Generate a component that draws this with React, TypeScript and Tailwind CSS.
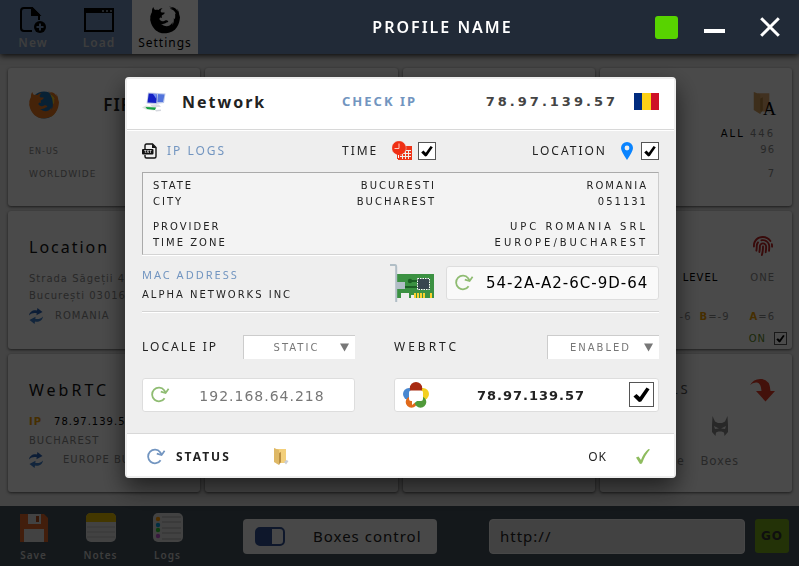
import React from "react";
import { ImFirefox } from "react-icons/im";
import { FaFingerprint } from "react-icons/fa";

const sans = "font-['Noto_Sans','Open_Sans',sans-serif]";
const wide = "font-['DejaVu_Sans',Verdana,sans-serif]";

function Check({ label, size }: { label: string; size: "sm" | "md" | "lg" }) {
  const box = size === "sm" ? "size-[13px]" : size === "md" ? "size-[18px]" : "size-[25px]";
  return (
    <span className={`relative inline-block shrink-0 ${box}`}>
      <input
        type="checkbox"
        defaultChecked
        aria-label={label}
        className="peer block size-full appearance-none border border-[#555] bg-white"
      />
      <svg viewBox="0 0 18 18" className="pointer-events-none absolute inset-0 hidden size-full peer-checked:block" aria-hidden="true">
        <path d="M3.2 10.4 5.4 8.6 7.8 10.8 12.600 4 14.800 5.200 8.800 14 7.200 14.400Z" fill="#000" />
      </svg>
    </span>
  );
}

function Refresh({ className }: { className: string }) {
  return (
    <svg viewBox="0 0 19 17" className={`h-[17px] w-[19px] shrink-0 ${className}`} fill="none" stroke="currentColor" aria-hidden="true">
      <path d="M13.600 12.200A6.800 6.800 0 1 1 13.200 4.200L14.500 6.500" strokeWidth="1.800" />
      <path d="M9.800 5.600 14.600 7 17.600 2.800" strokeWidth="1.700" />
    </svg>
  );
}

function Sync() {
  return (
    <svg viewBox="0 0 14 16" className="h-4 w-3.5 shrink-0" fill="#2a62b5" aria-hidden="true">
      <path d="M0 7.500C.6 3.600 4 1.600 8 2.400L8.400 0 13.500 4 7.400 7.200 7.800 5.200C5 4.600 2.400 5 0 7.500Z" />
      <path d="M14 8.500C13.400 12.400 10 14.400 6 13.600L5.600 16 .5 12 6.600 8.800 6.200 10.800C9 11.400 11.600 11 14 8.500Z" fill="#3c7cc8" />
    </svg>
  );
}

function Firefox() {
  return (
    <span className="relative block size-[30px]">
      <svg viewBox="0 0 30 30" className="absolute inset-0" aria-hidden="true">
        <circle cx="15" cy="15" r="13.500" fill="#1d6fb0" />
        <path d="M21 3.500A14 14 0 0 1 22 27Q27 14 21 3.500Z" fill="#f3c524" />
      </svg>
      <ImFirefox className="absolute inset-0 size-[30px] text-[#e8771f]" />
    </span>
  );
}

function Computers() {
  return (
    <svg viewBox="0 0 24 20" className="h-5 w-6" aria-hidden="true">
      <path d="M13 1 23.500 1.500 22 11 12 12Z" fill="#b9c6ea" />
      <path d="M14 2 22.500 2.500 21 10 13 10Z" fill="#5274dc" />
      <path d="M6 .5 16 1 15.200 12.500 4.500 11.500Z" fill="#c4cde6" />
      <path d="M6.700 1.500 15 2 14.300 11 5.500 10.500Z" fill="#1420c4" />
      <path d="M11 2 15 2 14.400 7Z" fill="#6f8cf0" />
      <path d="M8 12.500 17 12.500 19 15 10 15Z" fill="#d8dbe2" />
      <path d="M0 15.500 4 13.500 15 15.500 12 18.500 4 17.500Z" fill="#dfe4df" />
      <path d="M3.500 15 14 15.500 13 18 5 17Z" fill="#15a042" />
      <path d="M13 18 19 17.500 19 19 14 19.500Z" fill="#d5d8de" />
    </svg>
  );
}

function TxtFile() {
  return (
    <svg viewBox="0 0 15 16" className="h-4 w-[15px] overflow-visible" aria-hidden="true">
      <path d="M3 6V2.500Q3 1 4.500 1H10.500L14 4.500V13.500Q14 15 12.500 15H4.500Q3 15 3 13.500V12" fill="none" stroke="#111" strokeWidth="1.400" />
      <path d="M10 1V5H14Z" fill="#111" />
      <rect x="0" y="6" width="11.500" height="5.600" rx="1" fill="#111" />
      <text x="5.800" y="10.300" textAnchor="middle" fontSize="4" fontWeight="700" fill="#eee" fontFamily="Liberation Sans" letterSpacing="0">TXT</text>
    </svg>
  );
}

function TimeIcon() {
  return (
    <svg viewBox="0 0 20 20" className="size-5" aria-hidden="true">
      <rect x="6" y="5" width="14" height="14" fill="#ef3418" />
      <path d="M10 9.500H19M8 12.500H19M8 15.500H19M10.500 9V18M13.500 9V18M16.500 9V18" stroke="#eee" strokeWidth="1" />
      <circle cx="7" cy="7" r="7.200" fill="#ef2f14" stroke="#eee" strokeWidth=".4" />
      <path d="M7 2.500V7.500H2.500" fill="none" stroke="#ffc9bf" strokeWidth="1" />
      <path d="M5 13H8V18H5Z" fill="#ef3418" />
      <path d="M6.500 14V17" stroke="#fff" />
    </svg>
  );
}

function NetworkCard() {
  return (
    <svg viewBox="0 0 44 38" className="h-[38px] w-11" aria-hidden="true">
      <path d="M7 10H44V34H24V31H21V34H19V29H11V34H7Z" fill="#3b9142" />
      <path d="M0 1H5Q6.200 1 6.200 3V38" fill="none" stroke="#b1bec6" strokeWidth="2" />
      <rect x="7" y="18" width="8" height="7" fill="#b1bec6" />
      <path d="M15 23H27M20 17H27" stroke="#1c5e24" strokeWidth="2" />
      <circle cx="20" cy="17" r="2.200" fill="#1c5e24" />
      <rect x="27.500" y="14.500" width="12" height="11" fill="#37474f" stroke="#fff" strokeDasharray="1.500 1" />
      <path d="M25 29V34M28 29V34M31 29V34M34 29V34M41 29V34" stroke="#fbd130" strokeWidth="2" />
    </svg>
  );
}

function WebRtcLogo() {
  return (
    <svg viewBox="0 0 26 26" className="size-[26px]" aria-hidden="true">
      <circle cx="6" cy="12" r="6" fill="#4787d0" />
      <circle cx="20" cy="12" r="6" fill="#f3d021" />
      <circle cx="8.500" cy="20" r="5.800" fill="#e06a1b" />
      <circle cx="17.500" cy="20" r="5.800" fill="#509a3a" />
      <circle cx="13" cy="6.200" r="6.200" fill="#a82a10" />
      <path d="M8 8.500H18Q20 8.500 20 10.500V17Q20 19 18 19H14L9 23V19H8Q6 19 6 17V10.500Q6 8.500 8 8.500Z" fill="#fff" />
    </svg>
  );
}

function Folder({ className, tone }: { className: string; tone: string }) {
  return (
    <svg viewBox="0 0 15 17" className={className} aria-hidden="true">
      <path d="M3 1H12V15H3Z" fill={tone} />
      <path d="M0 0 5 2V17L0 14Z" fill={tone} />
      <path d="M0 0 5 2V17L0 14Z" fill="#a0722a" fillOpacity=".25" />
      <path d="M5 5 7 4V14L5 17Z" fill="#a0722a" fillOpacity=".7" />
      <path d="M10 14 12.500 12 14.500 13 12 16.500Z" fill="#c9cdd4" />
    </svg>
  );
}

function Tool({ label, active, children }: { label: string; active?: boolean; children: React.ReactNode }) {
  return (
    <button
      type="button"
      className={`flex w-[66px] flex-col items-center pt-[5px] text-xs leading-4 tracking-[1px] ${active ? "bg-white text-black" : "font-semibold text-[#ccc]"}`}
    >
      <span className="flex h-[30px] items-center">{children}</span>
      {label}
    </button>
  );
}

function DockItem({ label, children }: { label: string; children: React.ReactNode }) {
  return (
    <button type="button" className="flex w-[67px] flex-col items-center gap-1 text-[10px] font-semibold leading-4 tracking-[1px] text-[#ccc]">
      <span className="block size-[30px]">{children}</span>
      {label}
    </button>
  );
}

function Card({ children }: { children?: React.ReactNode }) {
  return <section className="overflow-hidden rounded-[3px] bg-[#f7f7f7] px-[21px] text-[#888] shadow-[0_1px_3px_rgba(0,0,0,0.6)]">{children}</section>;
}

function Cards() {
  return (
    <main className={`grid flex-1 grid-cols-4 grid-rows-3 gap-[5px] py-3.5 pl-2 pr-[7px] text-[10px] tracking-[1px] ${wide}`}>
      <Card>
        <div className="flex items-center justify-between pt-[22px]">
          <Firefox />
          <h2 className={`text-[17px] font-semibold leading-6 text-[#222] ${sans}`}>FIREFOX</h2>
        </div>
        <p className="mt-6 text-[8px] leading-4">EN-US</p>
        <p className="mt-1.5 text-[9px] leading-4">WORLDWIDE</p>
      </Card>
      <Card />
      <Card />
      <Card>
        <div className="-mr-1 flex flex-col items-end pt-6">
          <div className="relative h-6 w-[22px]">
            <Folder className="h-[22px] w-[21px]" tone="#dba66c" />
            <span className="absolute -bottom-px -right-px font-['Liberation_Serif',serif] text-lg leading-4 tracking-normal text-black">A</span>
          </div>
          <p className="mt-2.5 leading-4 tracking-[2px]"><span className="text-black">ALL</span> 446</p>
          <p className="leading-4">96</p>
          <p className="mt-2 leading-4">7</p>
        </div>
      </Card>
      <Card>
        <h2 className={`pt-6 text-base leading-6 tracking-[2px] text-[#111] ${sans}`}>Location</h2>
        <p className="mt-3 whitespace-nowrap leading-4">Strada Săgeții 4</p>
        <p className="whitespace-nowrap leading-[18px]">București 030167</p>
        <p className="flex items-center gap-3 leading-[22px]"><Sync /> ROMANIA</p>
      </Card>
      <Card />
      <Card />
      <Card>
        <div className="-mr-0.5 flex justify-end pt-[23px]"><FaFingerprint className="h-6 w-5 text-[#b22]" /></div>
        <p className="-mr-1 mt-3 flex justify-end gap-8 leading-4"><span className="text-black">LEVEL</span><span>ONE</span></p>
        <p className="-mr-1 mt-[23px] flex justify-end whitespace-nowrap leading-4">
          <span>-6</span><span className="ml-2"><b className="text-[#e99a00]">B</b>=-9</span><span className="ml-5"><b className="text-[#e99a00]">A</b>=6</span>
        </p>
        <div className="-mr-4 mt-1.5 flex items-center justify-end gap-2 text-[#5c8a1e]">ON <Check label="Protection on" size="sm" /></div>
      </Card>
      <Card>
        <h2 className={`pt-6 text-base leading-6 tracking-[3px] text-[#111] ${sans}`}>WebRTC</h2>
        <p className="mt-3 flex gap-3 leading-4"><b className="text-[#e99a00]">IP</b><span className="text-black">78.97.139.57</span></p>
        <p className="leading-[22px]">BUCHAREST</p>
        <p className="flex items-center gap-5 whitespace-nowrap leading-4"><Sync /> EUROPE BUCHAREST</p>
      </Card>
      <Card />
      <Card />
      <Card>
        <div className={`-mr-1 flex items-center justify-between pt-6 text-[13px] tracking-[3px] text-[#555] ${sans}`}>
          <span className="w-[70px] text-right">TOOLS</span>
          <svg viewBox="0 0 25 24" className="h-6 w-[25px]" aria-hidden="true">
            <path d="M0 7Q4 0 12 1Q20 2 20.500 13H25L15.500 23.500 6 13H11.500Q11 5 7 4.500Q3 4 0 7Z" fill="#df3a26" />
          </svg>
        </div>
        <div className={`-mr-1 flex justify-between pr-9 pt-3.5 text-xs leading-4 tracking-[1px] ${sans}`}>
          <span className="w-16 self-end text-right">Cache</span>
          <span className="flex flex-col items-center gap-4">
            <svg viewBox="0 0 16 21" className="h-[21px] w-4" aria-hidden="true">
              <path d="M.5 0 3 5.500 6 7H10L13 5.500 15.500 0 16 9V16L12.500 20 12 16.500 9.500 15.500H6.500L4 16.500 3.500 20 0 16V9Z" fill="#888" />
              <path d="M2 10 7 12.500 3 13ZM14 10 9 12.500 13 13Z" fill="#eee" />
            </svg>
            Boxes
          </span>
        </div>
      </Card>
    </main>
  );
}

function ModeSelect({ id, options }: { id: string; options: string[] }) {
  return (
    <span className="relative block">
      <select id={id} className={`h-6 w-[112px] appearance-none border-l border-t border-[#ccc] bg-white pr-1.5 pt-0.5 text-[10px] tracking-[2px] text-[#777] [text-align-last:center] ${wide}`}>
        {options.map((option) => <option key={option}>{option}</option>)}
      </select>
      <svg viewBox="0 0 10 9" className="pointer-events-none absolute right-1.5 top-2 h-[9px] w-[9px]" aria-hidden="true"><path d="M0 0H10L5 9Z" fill="#777" /></svg>
    </span>
  );
}

function NetworkDialog() {
  return (
    <div className="fixed inset-0 z-10 flex items-center justify-center bg-black/70 pb-3 pl-0.5">
      <div role="dialog" aria-labelledby="network-title" className="w-[551px] max-w-full rounded-[4px] border-2 border-[#eee] bg-[#eee] text-[#222] shadow-[0_10px_25px_rgba(0,0,0,0.6)]">
        <header className="flex h-[51px] items-center border-b border-[#d8d8d8] bg-white px-[15px] pb-1">
          <div className="flex w-[200px] items-center gap-4">
            <Computers />
            <h1 id="network-title" className="text-base font-bold leading-6 tracking-[2px]">Network</h1>
          </div>
          <a href="#check" className="text-[13px] font-bold tracking-[2px] text-[#7295c0]">CHECK IP</a>
          <strong className={`ml-auto text-[13px] tracking-[3px] text-[#444] ${wide}`}>78.97.139.57</strong>
          <svg viewBox="0 0 25 17" className="ml-4 h-[17px] w-[25px]" role="img" aria-label="Romania">
            <path d="M0 0H8V17H0Z" fill="#002b7f" /><path d="M8 0H17V17H8Z" fill="#fcd116" /><path d="M17 0H25V17H17Z" fill="#ce1126" />
          </svg>
        </header>
        <div className="border-t border-white px-[15px]">
          <div className="flex h-[41px] items-center text-xs leading-5 tracking-[2px]">
            <div className="flex w-[200px] items-center gap-2.5">
              <TxtFile />
              <a href="#logs" className="text-[#7295c0]">IP LOGS</a>
            </div>
            <span className="mr-3.5">TIME</span>
            <TimeIcon />
            <span className="ml-1.5 flex"><Check label="Time" size="md" /></span>
            <span className="ml-auto mr-3.5">LOCATION</span>
            <svg viewBox="0 0 12 18" className="mr-2 h-[18px] w-3" aria-hidden="true">
              <path fillRule="evenodd" d="M6 0A6 6 0 0 1 12 6Q12 9 6 18Q0 9 0 6A6 6 0 0 1 6 0ZM6 3.600A2.400 2.400 0 1 0 6 8.400A2.400 2.400 0 1 0 6 3.600Z" fill="#0a84ff" />
            </svg>
            <Check label="Location" size="md" />
          </div>
          <div className="h-[83px] border border-b-[#d4d4d4] border-l-[#aaa] border-r-[#ccc] border-t-[#aaa] bg-[#f3f3f3] px-2.5 py-[5px] shadow-[0_1px_0_#fff]">
            <table className={`w-full text-[10px] leading-4 tracking-[2px] ${wide}`}>
              <tbody>
                <tr><th className="text-left font-normal">STATE</th><td className="text-right">BUCURESTI</td><td className="w-[212px] text-right">ROMANIA</td></tr>
                <tr><th className="text-left font-normal">CITY</th><td className="text-right">BUCHAREST</td><td className="text-right">051131</td></tr>
                <tr><th className="pt-[9px] text-left font-normal">PROVIDER</th><td colSpan={2} className="pt-[9px] text-right tracking-[3px]">UPC ROMANIA SRL</td></tr>
                <tr><th className="text-left font-normal">TIME ZONE</th><td colSpan={2} className="text-right tracking-[3px]">EUROPE/BUCHAREST</td></tr>
              </tbody>
            </table>
          </div>
          <div className="flex h-[57px] items-center border-b border-[#d4d4d4] shadow-[0_1px_0_#fff]">
            <div className="mr-auto pt-1">
              <label htmlFor="mac" className="block text-[11px] leading-5 tracking-[2px] text-[#7295c0]">MAC ADDRESS</label>
              <p className={`text-[10px] leading-5 tracking-[2px] ${wide}`}>ALPHA NETWORKS INC</p>
            </div>
            <NetworkCard />
            <div className="ml-3 flex h-[34px] w-[213px] items-center rounded-[3px] border border-[#ddd] bg-[#f9f9f9] pl-2">
              <Refresh className="text-[#8fbc72]" />
              <input id="mac" defaultValue="54-2A-A2-6C-9D-64" className={`ml-3 min-w-0 flex-1 bg-transparent pt-0.5 text-[15px] tracking-[1px] text-black ${wide}`} />
            </div>
          </div>
          <div className="flex justify-between pb-[21px] pt-[23px] text-xs">
            <div className="w-[213px]">
              <div className="flex items-center justify-between">
                <label htmlFor="locale" className="tracking-[2px]">LOCALE IP</label>
                <ModeSelect id="locale" options={["STATIC", "DYNAMIC"]} />
              </div>
              <div className="mt-[19px] flex h-[34px] items-center rounded-[3px] border border-[#ddd] bg-white pl-2">
                <Refresh className="text-[#8fbc72]" />
                <input aria-label="Local address" defaultValue="192.168.64.218" className={`min-w-0 flex-1 bg-transparent pt-0.5 text-center text-sm tracking-[1px] text-[#777] ${wide}`} />
              </div>
            </div>
            <div className="w-[265px]">
              <div className="flex items-center justify-between">
                <label htmlFor="webrtc" className="tracking-[3px]">WEBRTC</label>
                <ModeSelect id="webrtc" options={["ENABLED", "DISABLED"]} />
              </div>
              <div className="mt-[19px] flex h-[34px] items-center rounded-[3px] border border-[#ddd] bg-white pl-2 pr-1">
                <WebRtcLogo />
                <input aria-label="WebRTC address" defaultValue="78.97.139.57" className={`min-w-0 flex-1 bg-transparent pl-1 pt-0.5 text-center text-[13px] font-bold tracking-[1px] ${wide}`} />
                <Check label="Use WebRTC address" size="lg" />
              </div>
            </div>
          </div>
        </div>
        <footer className="flex h-[43px] items-center border-t border-[#d8d8d8] bg-white px-5 pt-1 text-xs">
          <button type="button" className="flex items-center gap-2.5 font-bold tracking-[2px]"><Refresh className="text-[#7295c0]" />STATUS</button>
          <button type="button" aria-label="Open folder" className="ml-[43px]"><Folder className="h-[17px] w-[15px]" tone="#f3cf7a" /></button>
          <button type="button" className="ml-auto flex items-center gap-[29px] pr-1 tracking-[1px]">
            OK
            <svg viewBox="0 0 14 15" className="h-[15px] w-3.5" aria-hidden="true"><path d="M0 8.500 2.500 7.500 5 11Q7.500 4 12.500 0L14 .5Q9 6 6 14.500L4 15Z" fill="#8fbc5f" /></svg>
          </button>
        </footer>
      </div>
    </div>
  );
}

export default function App() {
  return (
    <div className={`flex min-h-screen flex-col bg-[#e3e3e3] ${sans}`}>
      <header className="flex h-[54px] bg-[#6e8cb7] shadow-[0_2px_6px_rgba(0,0,0,0.8)]">
        <nav className="flex">
          <Tool label="New">
            <svg viewBox="0 0 26 26" className="size-[26px]" fill="none" stroke="#000" strokeWidth="2" aria-hidden="true">
              <path d="M12 24H4Q1 24 1 21V4Q1 1 4 1H12L19 8V13" /><path d="M12 1V8H19Z" fill="#000" />
              <circle cx="20" cy="20" r="6" fill="#000" stroke="none" /><path d="M20 16.500V23.500M16.500 20H23.500" stroke="#6e8cb7" />
            </svg>
          </Tool>
          <Tool label="Load">
            <svg viewBox="0 0 30 24" className="h-6 w-[30px]" aria-hidden="true">
              <path d="M1 1H29V23H1Z" fill="none" stroke="#000" strokeWidth="2" /><path d="M1 1H29V5H1Z" />
              <path d="M18 3H20M22 3H24M26 3H28" stroke="#9ab" strokeWidth="1.500" />
            </svg>
          </Tool>
          <Tool label="Settings" active><ImFirefox className="size-[30px]" /></Tool>
        </nav>
        <h1 className="relative z-20 flex-1 self-center pl-8 text-center text-base font-semibold tracking-[2px] text-white">PROFILE NAME</h1>
        <div className="relative z-20 flex items-center pr-[19px] text-white">
          <span className="size-[23px] rounded-[3px] bg-[#58d300]" />
          <button type="button" aria-label="Minimize" className="ml-[26px] mt-2 h-1 w-[21px] bg-white" />
          <button type="button" aria-label="Close" className="ml-[35px]">
            <svg viewBox="0 0 20 20" className="size-5" aria-hidden="true"><path d="M1.200 1.200 18.800 18.800M18.800 1.200 1.200 18.800" stroke="#fff" strokeWidth="3" /></svg>
          </button>
        </div>
      </header>
      <Cards />
      <footer className="flex h-[60px] items-center bg-[#43505a]">
        <nav className="flex w-[243px] pt-1">
          <DockItem label="Save">
            <svg viewBox="0 0 30 30" aria-hidden="true"><path d="M1 1H25L29 5V29H1Z" fill="#dc6428" /><path d="M9 1H22V11H9Z" fill="#ddd" /><path d="M17 3H20V9H17Z" fill="#b14b18" /><path d="M5 16H25V29H5Z" fill="#ddd" /></svg>
          </DockItem>
          <DockItem label="Notes">
            <svg viewBox="0 0 30 30" aria-hidden="true"><rect width="30" height="29" rx="5" fill="#ddd" /><path d="M0 9V5Q0 0 5 0H25Q30 0 30 5V9Z" fill="#e2b800" /><path d="M1 14H29M1 19H29M1 24H29" stroke="#bbb" /></svg>
          </DockItem>
          <DockItem label="Logs">
            <svg viewBox="0 0 30 30" aria-hidden="true"><rect width="30" height="29" rx="5" fill="#ddd" /><path d="M9 4H28M9 9H28M9 15H28M9 20H28M9 26H28" stroke="#aaa" /><circle cx="5" cy="6" r="2.200" fill="#f90" /><circle cx="5" cy="12" r="2.200" fill="#09d" /><circle cx="5" cy="17" r="2.200" fill="#3c3" /><circle cx="5" cy="23" r="2.200" fill="#b5c" /></svg>
          </DockItem>
        </nav>
        <button type="button" className="flex h-[35px] w-[194px] items-center gap-7 rounded-[4px] bg-[#f0f0f0] pl-3 text-[15px] tracking-[1px] text-[#222]">
          <svg viewBox="0 0 30 19" className="h-[19px] w-[30px]" aria-hidden="true"><rect x="1" y="1" width="28" height="17" rx="4" fill="none" stroke="#2f4f8f" strokeWidth="2" /><path d="M5 1H17V18H5Q1 18 1 14V5Q1 1 5 1Z" fill="#2f4f8f" /></svg>
          Boxes control
        </button>
        <input aria-label="Address" defaultValue="http://" className="ml-[52px] h-[35px] min-w-0 flex-1 rounded-[4px] border border-[#eee] bg-[#dedede] px-2.5 text-[15px] tracking-[1px] text-[#222]" />
        <button type="button" className={`ml-2.5 mr-2.5 h-[34px] w-[34px] rounded-[3px] bg-[#75a81a] text-xs font-bold tracking-[1px] text-[#333] ${wide}`}>GO</button>
      </footer>
      <NetworkDialog />
    </div>
  );
}
